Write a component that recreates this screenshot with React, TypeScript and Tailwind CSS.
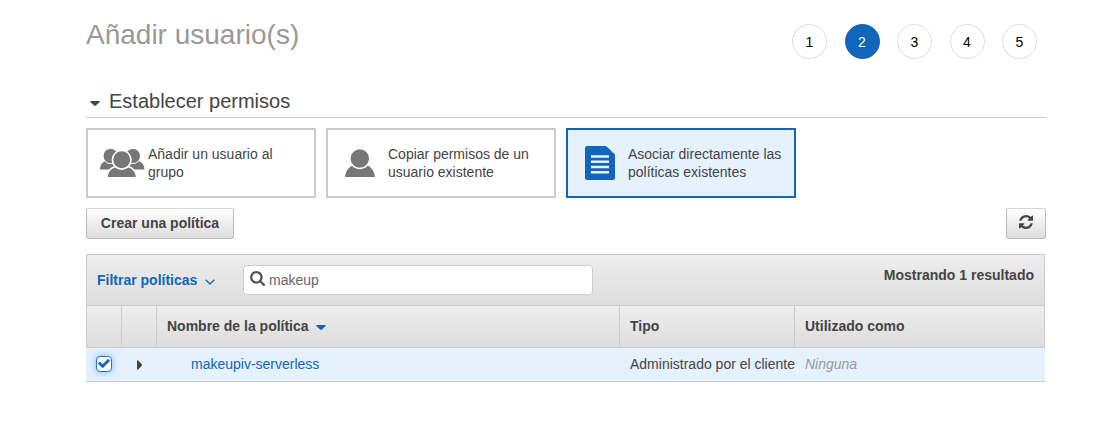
import type { ReactNode } from 'react';

const STEPS = [1, 2, 3, 4, 5];

function GroupIcon() {
  return (
    <svg width="46" height="34" viewBox="0 0 46 34" fill="#777" className="block">
      <path d="M1 23.5C1 18.5 4 15.2 8.5 14.6H15L18 23.5Z" />
      <path d="M45.4 23.5C45.4 18.5 42 15.2 37.5 14.6H31L28 23.5Z" />
      <circle cx="11.6" cy="10" r="7.6" stroke="#fff" strokeWidth="1" />
      <circle cx="33.9" cy="10" r="7.6" stroke="#fff" strokeWidth="1" />
      <path d="M7.9 32V31C8.3 26 11 22.5 15.4 20.8H30C34.4 22.5 37.3 26 37.6 31V32Z" stroke="#fff" strokeWidth="1.6" />
      <rect x="0" y="31" width="46" height="3" fill="#fff" />
      <circle cx="22.7" cy="13.8" r="9.3" stroke="#fff" strokeWidth="1.6" />
    </svg>
  );
}

function UserIcon() {
  return (
    <svg width="32" height="34" viewBox="0 0 32 34" fill="#777" className="block">
      <path d="M1 31C1.5 25.5 4.5 21 9.3 19H22.7C27.5 21 30.5 25.5 31 31Z" />
      <circle cx="15.8" cy="12.5" r="10" stroke="#fff" strokeWidth="1.5" />
    </svg>
  );
}

function DocumentIcon() {
  return (
    <svg width="30" height="34" viewBox="0 0 30 34" className="block">
      <path d="M2 0H21L30 8.5V32Q30 34 28 34H2Q0 34 0 32V2Q0 0 2 0Z" fill="#1166bb" />
      <path d="M6 10.5H24M6 15.7H24M6 21H24M6 26.3H24" stroke="#e5f1fd" strokeWidth="2.4" />
    </svg>
  );
}

function OptionCard({ icon, children, selected = false }: { icon: ReactNode; children: ReactNode; selected?: boolean }) {
  return (
    <div
      className={
        selected
          ? 'flex h-[70px] w-[230px] items-center border-2 border-[#1166bb] bg-[#e5f1fd] pl-2.5'
          : 'flex h-[70px] w-[230px] items-center border-2 border-[#ccc] bg-white pl-2.5'
      }
    >
      <div className="flex w-12 shrink-0 justify-center">{icon}</div>
      <p className="w-[162px] pl-0.5 leading-[18px]">{children}</p>
    </div>
  );
}

export default function App() {
  return (
    <main className="h-[426px] bg-white pr-[61px] pl-[86px] font-['Liberation_Sans',Arial,sans-serif] text-sm leading-[18px] text-[#444]">
      <header className="flex h-[76px] items-start justify-between pt-[18px]">
        <h1 className="text-[28px] leading-[34px] text-[#999]">Añadir usuario(s)</h1>
        <ol className="mt-1.5 mr-[9px] flex gap-[17.5px]">
          {STEPS.map((step) => (
            <li
              key={step}
              className={
                step === 2
                  ? 'flex size-[35px] items-center justify-center rounded-full border border-[#1166bb] bg-[#1166bb] text-white'
                  : 'flex size-[35px] items-center justify-center rounded-full border border-[#ddd] text-black'
              }
            >
              {step}
            </li>
          ))}
        </ol>
      </header>

      <h2 className="flex h-[42px] items-center gap-[9px] border-b border-[#ccc] pt-2.5 pl-1 text-xl leading-6">
        <svg width="10" height="6" viewBox="0 0 10 6" className="mt-1 block" fill="#444">
          <path d="M1 0H9Q10.3 .3 9.4 1.2L5.9 4.6Q5 5.4 4.1 4.6L.6 1.2Q-.3 .3 1 0Z" />
        </svg>
        <span className="-mt-0.5">Establecer permisos</span>
      </h2>

      <div className="mt-2.5 flex gap-2.5">
        <OptionCard icon={<GroupIcon />}>Añadir un usuario al<br />grupo</OptionCard>
        <OptionCard icon={<div className="mr-1"><UserIcon /></div>}>Copiar permisos de un<br />usuario existente</OptionCard>
        <OptionCard selected icon={<div className="mr-1"><DocumentIcon /></div>}>Asociar directamente las<br />políticas existentes</OptionCard>
      </div>

      <div className="mt-2.5 flex justify-between">
        <button className="h-[31px] w-[148px] rounded-[3px] border border-[#bbb] border-t-[#d5d5d5] bg-linear-to-b from-white to-[#ddd] pb-px font-bold">
          Crear una política
        </button>
        <button
          aria-label="Actualizar"
          className="flex h-[31px] w-10 justify-center rounded-[3px] border border-[#bbb] border-t-[#d5d5d5] bg-linear-to-b from-white to-[#ddd] pt-1.5"
        >
          <svg width="14" height="14" viewBox="0 0 1536 1536" fill="#444">
            <path d="M1511 928q0 5-1 7-64 268-268 434.5t-478 166.5q-146 0-282.5-55t-243.5-157l-129 129q-19 19-45 19t-45-19-19-45v-448q0-26 19-45t45-19h448q26 0 45 19t19 45-19 45l-137 137q71 66 161 102t187 36q134 0 250-65t186-179q11-17 53-117 8-23 30-23h192q13 0 22.5 9.5t9.5 22.5zm25-800v448q0 26-19 45t-45 19h-448q-26 0-45-19t-19-45 19-45l138-138q-148-137-349-137-134 0-250 65t-186 179q-11 17-53 117-8 23-30 23h-199q-13 0-22.5-9.5t-9.5-22.5v-7q65-268 270-434.5t480-166.5q146 0 284 55.5t245 156.5l130-129q19-19 45-19t45 19 19 45z" />
          </svg>
        </button>
      </div>

      <section className="mt-[15px] w-[959px]">
        <div className="flex h-[51px] items-start border border-b-0 border-[#ccc] bg-linear-to-b from-[#eee] to-[#ddd] pt-2.5 pr-2.5 pl-2.5">
          <button className="flex h-[30px] w-[146px] items-center gap-2 font-bold text-[#1166bb]">
            Filtrar políticas
            <svg width="10" height="6" viewBox="0 0 10 6" className="mt-1" fill="none" stroke="#1166bb" strokeWidth="1.3">
              <path d="M.7.7L5 5L9.3.7" />
            </svg>
          </button>
          <label className="flex h-[30px] w-[350px] items-center rounded border border-[#ccc] bg-white pl-1.5 text-[#666]">
            <svg width="15" height="15" viewBox="64 128 1664 1664" className="mr-1 mb-[3px]" fill="#555">
              <path d="M1216 832q0-185-131.5-316.5t-316.5-131.5-316.5 131.5-131.5 316.5 131.5 316.5 316.5 131.5 316.5-131.5 131.5-316.5zm512 832q0 52-38 90t-90 38q-54 0-90-38l-343-342q-179 124-399 124-143 0-273.5-55.5t-225-150-150-225-55.5-273.5 55.5-273.5 150-225 225-150 273.5-55.5 273.5 55.5 225 150 150 225 55.5 273.5q0 220-124 399l343 343q37 37 37 90z" />
            </svg>
            <input defaultValue="makeup" className="min-w-0 flex-1 bg-transparent outline-none" />
          </label>
          <strong className="mt-px ml-auto">Mostrando 1 resultado</strong>
        </div>

        <div className="grid h-[43px] grid-cols-[35px_35px_463px_175px_249px] border border-[#ccc] bg-linear-to-b from-[#eee] to-[#ddd] font-bold">
          <div className="border-r border-[#ccc]" />
          <div className="border-r border-[#ccc]" />
          <div className="flex items-center gap-[7px] border-r border-[#ccc] pb-0.5 pl-2.5">
            Nombre de la política
            <svg width="10" height="6" viewBox="0 0 10 6" className="mt-1" fill="#1166bb">
              <path d="M1 0H9Q10.3 .3 9.4 1.2L5.9 4.6Q5 5.4 4.1 4.6L.6 1.2Q-.3 .3 1 0Z" />
            </svg>
          </div>
          <div className="flex items-center border-r border-[#ccc] pb-0.5 pl-2.5">Tipo</div>
          <div className="flex items-center pb-0.5 pl-2.5">Utilizado como</div>
        </div>

        <div className="grid h-[34px] grid-cols-[36px_35px_463px_175px_250px] items-center border-b border-[#ccc] bg-[#e5f1fd] pb-[2px]">
          <span
            role="checkbox"
            aria-checked="true"
            className="ml-2.5 flex size-4 items-center justify-center rounded-[4px] border border-[#2277cc] bg-white shadow-[0_0_7px_#77b5f0]"
          >
            <svg width="12" height="9" viewBox="121 334 1550 1188" fill="#1166bb">
              <path d="M1671 566q0 40-28 68l-724 724-136 136q-28 28-68 28t-68-28l-136-136-362-362q-28-28-28-68t28-68l136-136q28-28 68-28t68 28l294 295 656-657q28-28 68-28t68 28l136 136q28 28 28 68z" />
            </svg>
          </span>
          <svg width="6" height="10" viewBox="0 0 6 10" className="mt-0.5 ml-[15px]" fill="#444">
            <path d="M0 1Q.3-.3 1.2.6L4.6 4.1Q5.4 5 4.6 5.9L1.2 9.4Q.3 10.3 0 9Z" />
          </svg>
          <a className="pl-[34px] text-[#1166bb]">makeupiv-serverless</a>
          <span className="pl-2.5 whitespace-nowrap">Administrado por el cliente</span>
          <em className="pl-2.5 text-[#999]">Ninguna</em>
        </div>
      </section>
    </main>
  );
}
